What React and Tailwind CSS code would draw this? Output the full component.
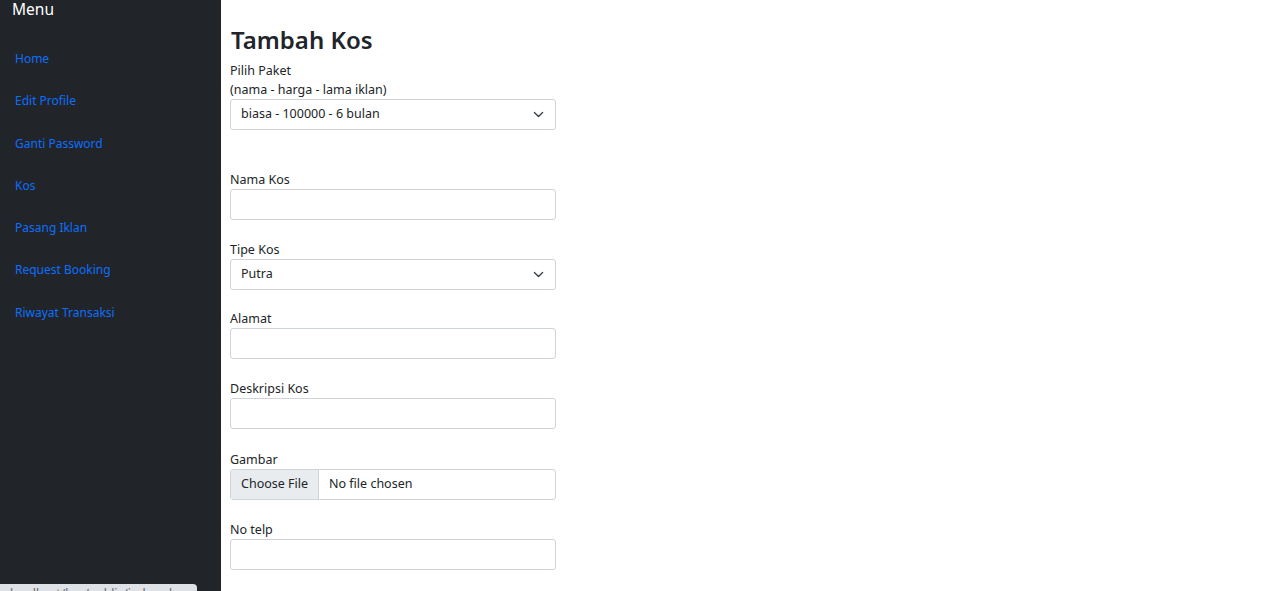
import React from "react";

const font = { fontFamily: '"Noto Sans", "Segoe UI", Arial, sans-serif' };

function Chevron() {
  return (
    <svg width="11" height="11" viewBox="0 0 16 16" fill="none" className="shrink-0">
      <path d="M2 5l6 6 6-6" stroke="#343a40" strokeWidth="1.8" strokeLinecap="round" strokeLinejoin="round" />
    </svg>
  );
}

function Label({ children }) {
  return <div className="h-[19px] leading-[19px] text-[12.5px] text-[#212529]">{children}</div>;
}

function Input() {
  return <div className="h-[31px] w-[326px] rounded-[3px] border border-[#ced4da] bg-white" />;
}

function Select({ value }) {
  return (
    <div className="flex h-[31px] w-[326px] items-center justify-between rounded-[3px] border border-[#ced4da] bg-white pl-[10px] pr-[11px] text-[12.5px] text-[#212529]">
      <span>{value}</span>
      <Chevron />
    </div>
  );
}

export default function App() {
  const links = ["Home", "Edit Profile", "Ganti Password", "Kos", "Pasang Iklan", "Request Booking", "Riwayat Transaksi"];
  return (
    <div className="relative flex h-[591px] w-[1280px] overflow-hidden bg-white" style={font}>
      <aside className="flex h-full w-[221px] shrink-0 flex-col bg-[#212529]">
        <div className="pl-[12px] text-[15.5px] leading-[18px] text-white">Menu</div>
        <nav className="mt-[31px] flex flex-col gap-[23px] pl-[15px]">
          {links.map((l) => (
            <a key={l} className="h-[19.3px] leading-[19.3px] text-[12px] text-[#0d6efd]">{l}</a>
          ))}
        </nav>
      </aside>
      <main className="flex flex-col pl-[9px] text-[#212529]">
        <h2 className="mt-[24px] h-[31px] pl-[1px] text-[24px] font-semibold leading-[31px]">Tambah Kos</h2>
        <div className="mt-[6px]">
          <Label>Pilih Paket</Label>
          <Label>(nama - harga - lama iklan)</Label>
          <Select value="biasa - 100000 - 6 bulan" />
        </div>
        <div className="mt-[40px]">
          <Label>Nama Kos</Label>
          <Input />
        </div>
        <div className="mt-[20px]">
          <Label>Tipe Kos</Label>
          <Select value="Putra" />
        </div>
        <div className="mt-[19px]">
          <Label>Alamat</Label>
          <Input />
        </div>
        <div className="mt-[20px]">
          <Label>Deskripsi Kos</Label>
          <Input />
        </div>
        <div className="mt-[21px]">
          <Label>Gambar</Label>
          <div className="flex h-[31px] w-[326px] items-stretch overflow-hidden rounded-[3px] border border-[#ced4da] bg-white text-[12.5px]">
            <div className="flex items-center border-r border-[#ced4da] bg-[#e9ecef] px-[10px]">Choose File</div>
            <div className="flex items-center pl-[10px]">No file chosen</div>
          </div>
        </div>
        <div className="mt-[20px]">
          <Label>No telp</Label>
          <Input />
        </div>
      </main>
      <div className="absolute bottom-0 left-0 h-[7px] w-[197px] overflow-hidden rounded-tr-[4px] bg-[#dee1e6] pl-[10px] text-[12px] leading-[14px] text-[#666]">
        <span className="relative top-[3px]">localhost/kos/public/index.php</span>
      </div>
    </div>
  );
}
